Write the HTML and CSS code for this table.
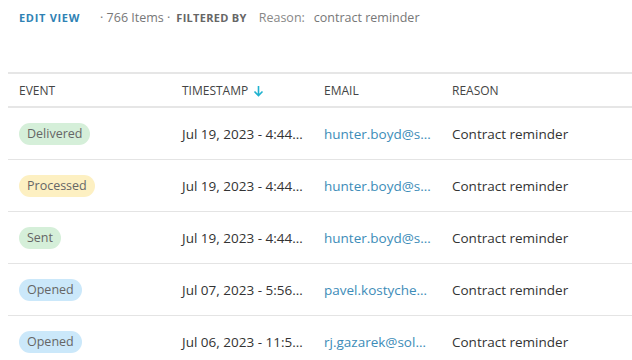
FILE: index.html
```html
<!DOCTYPE html>
<html>
<head>
<meta charset="utf-8">
<link rel="stylesheet" href="styles.css">
</head>
<body>
<div class="toolbar">
  <span class="edit">EDIT VIEW</span>
  <span class="count">· 766 Items ·</span>
  <span class="filtered">FILTERED BY</span>
  <span class="fkey">Reason:</span>
  <span class="fval">contract reminder</span>
</div>
<div class="table">
  <div class="row head">
    <div class="cell">EVENT</div>
    <div class="cell">TIMESTAMP <svg class="arrow" width="11" height="12" viewBox="0 0 11 12"><path d="M5.5 1v9.5M1.5 6.5l4 4 4-4" fill="none" stroke="#1fb2cf" stroke-width="1.6"/></svg></div>
    <div class="cell">EMAIL</div>
    <div class="cell">REASON</div>
  </div>
  <div class="row">
    <div class="cell"><span class="badge green">Delivered</span></div>
    <div class="cell">Jul 19, 2023 - 4:44 PM</div>
    <div class="cell email">hunter.boyd@solarwinds.com</div>
    <div class="cell">Contract reminder</div>
  </div>
  <div class="row">
    <div class="cell"><span class="badge yellow">Processed</span></div>
    <div class="cell">Jul 19, 2023 - 4:44 PM</div>
    <div class="cell email">hunter.boyd@solarwinds.com</div>
    <div class="cell">Contract reminder</div>
  </div>
  <div class="row">
    <div class="cell"><span class="badge green">Sent</span></div>
    <div class="cell">Jul 19, 2023 - 4:44 PM</div>
    <div class="cell email">hunter.boyd@solarwinds.com</div>
    <div class="cell">Contract reminder</div>
  </div>
  <div class="row">
    <div class="cell"><span class="badge blue">Opened</span></div>
    <div class="cell">Jul 07, 2023 - 5:56 PM</div>
    <div class="cell email">pavel.kostychev@solarwinds.com</div>
    <div class="cell">Contract reminder</div>
  </div>
  <div class="row">
    <div class="cell"><span class="badge blue">Opened</span></div>
    <div class="cell">Jul 06, 2023 - 11:52 AM</div>
    <div class="cell email">rj.gazarek@solarwinds.com</div>
    <div class="cell">Contract reminder</div>
  </div>
</div>
</body>
</html>
```
FILE: styles.css
```css
html, body {
  margin: 0;
  background: #fff;
  font-family: "Open Sans", "Noto Sans", sans-serif;
  overflow: hidden;
}
.toolbar {
  height: 34px;
  display: flex;
  align-items: center;
  padding-left: 19px;
  white-space: nowrap;
}
.edit {
  font-size: 11px;
  font-weight: 700;
  letter-spacing: 0.7px;
  color: #2f82b4;
  margin-right: 20px;
}
.count {
  font-size: 12.5px;
  color: #777;
  margin-right: 6px;
}
.filtered {
  font-size: 11px;
  font-weight: 700;
  letter-spacing: 0.3px;
  color: #666;
  margin-right: 12px;
}
.fkey {
  font-size: 12.5px;
  color: #888;
  margin-right: 9px;
}
.fval {
  font-size: 12.5px;
  color: #777;
}
.table {
  margin: 38px 0 0 8px;
}
.row {
  display: grid;
  grid-template-columns: 163px 142px 128px 1fr;
  height: 51px;
  border-bottom: 1px solid #e4e4e4;
  align-items: center;
}
.row.head {
  height: 32px;
  border-top: 2px solid #e6e6e6;
  border-bottom: 2px solid #e6e6e6;
}
.cell {
  padding: 0 10px 0 11px;
  white-space: nowrap;
  overflow: hidden;
  text-overflow: ellipsis;
  font-size: 13.5px;
  color: #333;
}
.head .cell {
  font-size: 12px;
  color: #444;
  display: flex;
  align-items: center;
}
.arrow {
  margin-left: 5px;
  margin-top: 2px;
}
.email {
  color: #3d8cb8;
}
.badge {
  display: inline-block;
  height: 22px;
  line-height: 22px;
  padding: 0 8px;
  border-radius: 11px;
  font-size: 12.5px;
  color: #666;
}
.green { background: #d5efd9; }
.yellow { background: #fdf0c2; }
.blue { background: #cbe8fa; }
```
